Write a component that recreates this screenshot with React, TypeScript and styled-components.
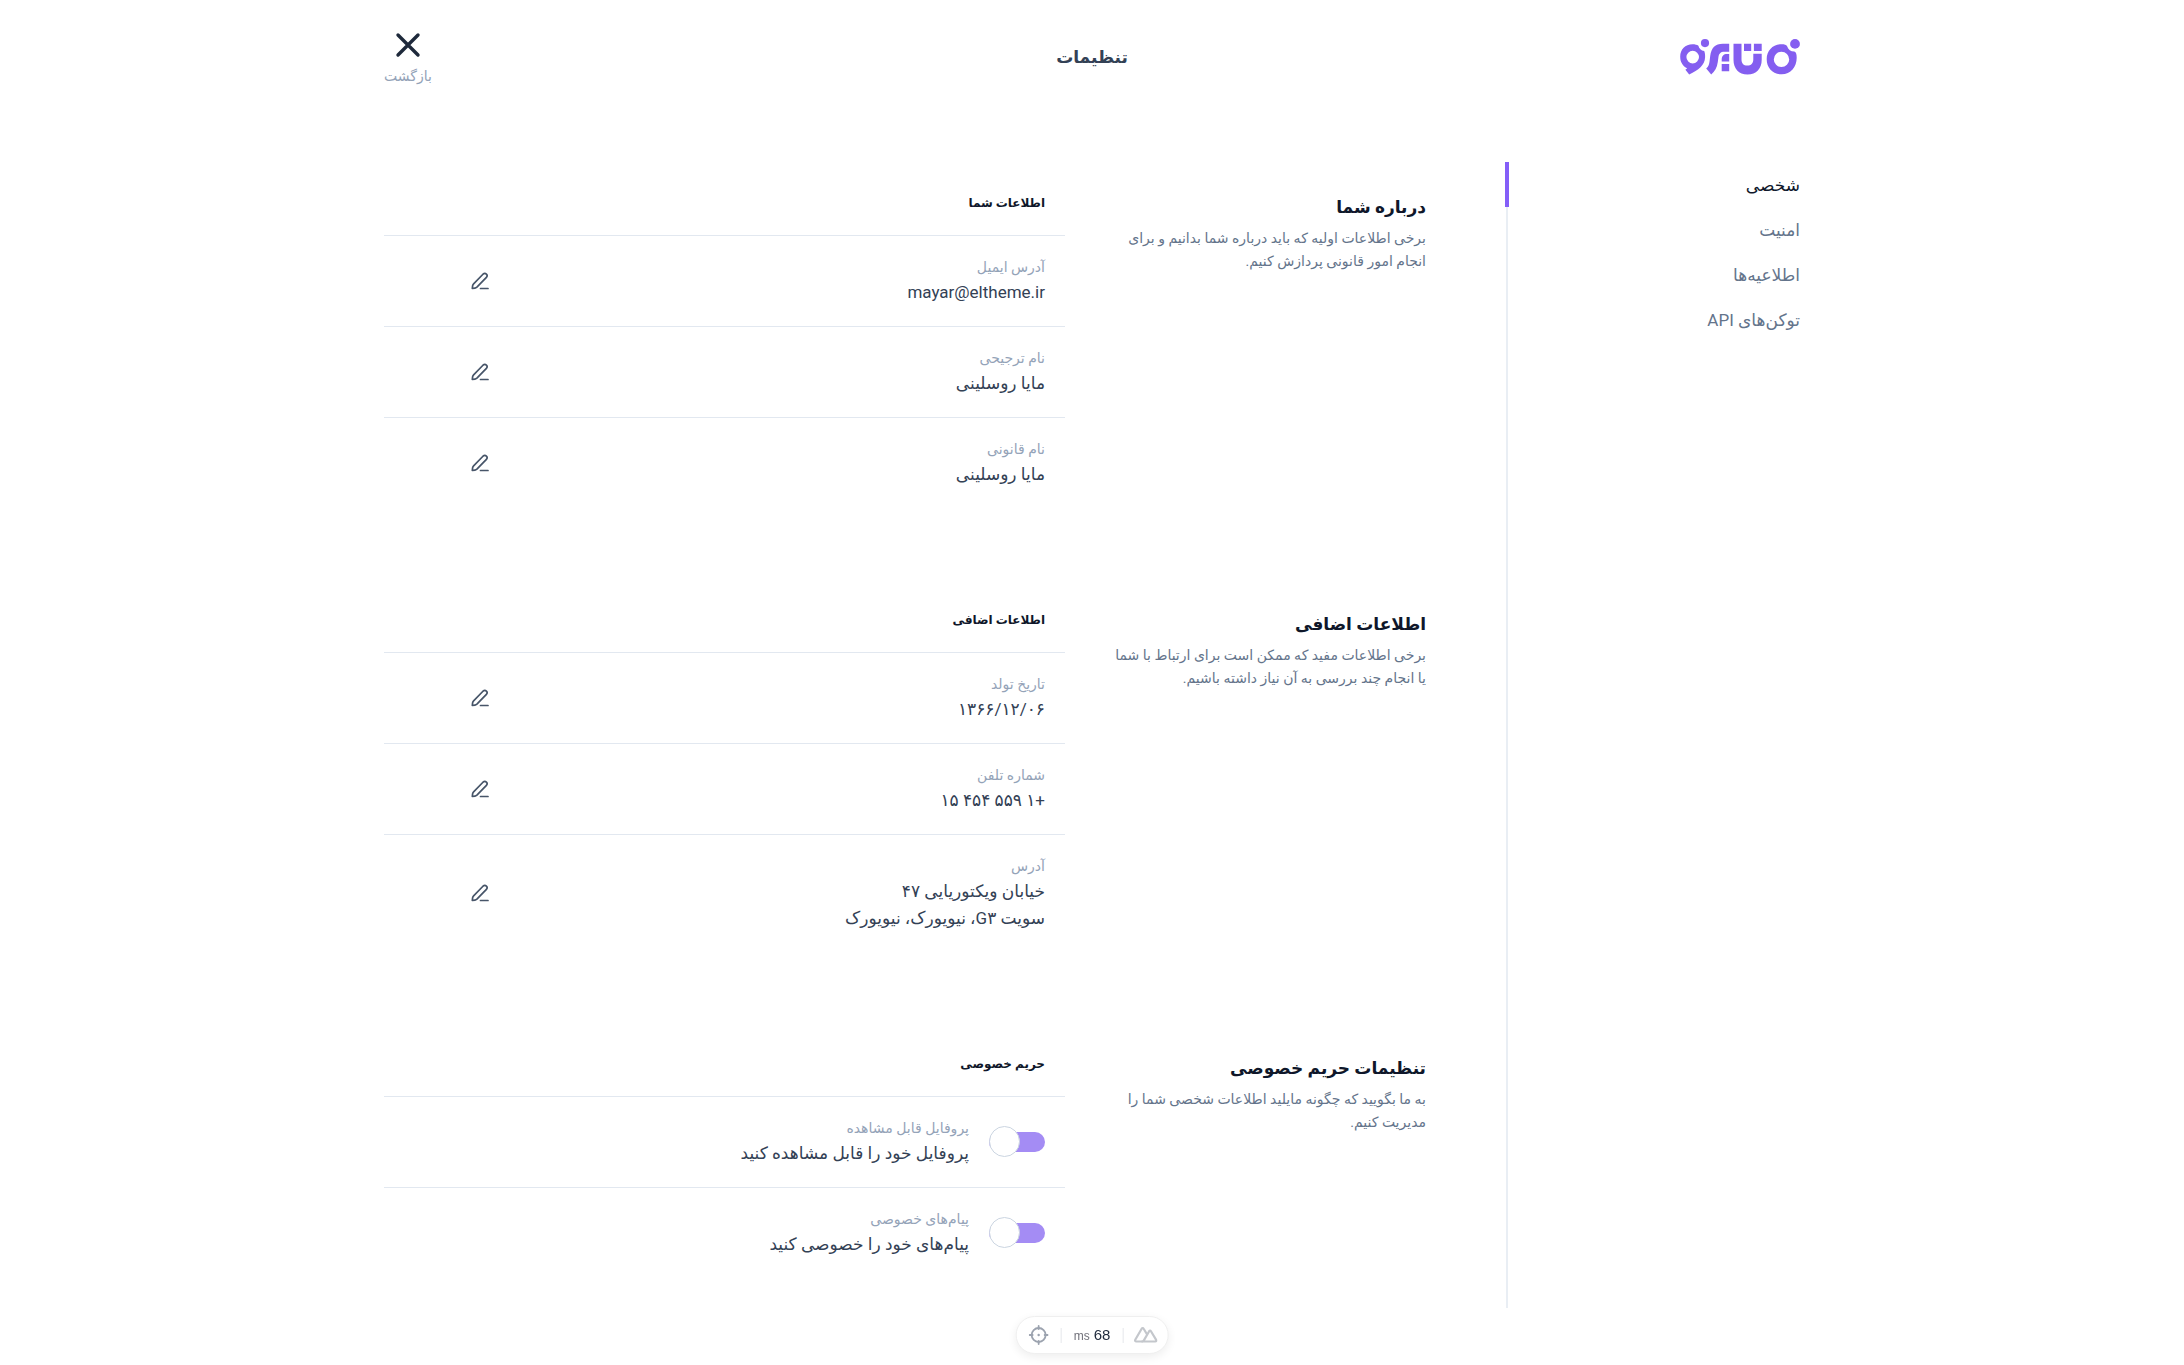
import React from "react";
import styled, { createGlobalStyle } from "styled-components";

const GlobalStyle = createGlobalStyle`
  *, *::before, *::after { box-sizing: border-box; }
  body {
    margin: 0;
    background: #fff;
    color: #334155;
    font-family: Roboto, "DejaVu Sans", sans-serif;
    font-size: 16px;
  }
  h1, h2, h3, p, ul { margin: 0; padding: 0; }
  ul { list-style: none; }
`;

const Page = styled.div`
  max-width: 1464px;
  min-height: 100vh;
  margin: 0 auto;
  padding: 0 24px 56px;
`;

const Header = styled.header`
  display: grid;
  grid-template-columns: 1fr auto 1fr;
  align-items: center;
  height: 114px;
  margin-bottom: 48px;
`;

const LogoLink = styled.a`
  display: block;
  width: 120px;
  height: 36px;
  color: #845ef0;
`;

const PageTitle = styled.h1`
  font-size: 17px;
  line-height: 28px;
  font-weight: 600;
  color: #334155;
`;

const BackButton = styled.button`
  justify-self: end;
  display: flex;
  flex-direction: column;
  align-items: center;
  gap: 8px;
  padding: 4px 0 0;
  border: 0;
  background: none;
  color: #94a3b8;
  font: inherit;
  font-size: 14px;
  line-height: 20px;
  cursor: pointer;
  svg { color: #1e293b; }
`;

const Columns = styled.div`
  display: flex;
`;

const Nav = styled.nav`
  position: relative;
  z-index: 1;
  flex: 0 0 292px;
  display: flex;
  flex-direction: column;
`;

const NavLink = styled.a<{ $active?: boolean }>`
  display: flex;
  align-items: center;
  height: 45px;
  margin-inline-end: -3px;
  border-inline-end: 4px solid ${(p) => (p.$active ? "#845ef8" : "transparent")};
  color: ${(p) => (p.$active ? "#0f172a" : "#64748b")};
  font-size: 17px;
  font-weight: ${(p) => (p.$active ? 500 : 400)};
  text-decoration: none;
`;

const Main = styled.main`
  flex: 1;
  min-width: 0;
  display: flex;
  flex-direction: column;
  gap: 71px;
  padding-inline-start: 80px;
  padding-bottom: 30px;
  border-inline-start: 2px solid #e9eef4;
`;

const Section = styled.section`
  display: grid;
  grid-template-columns: 361px minmax(0, 1fr);
`;

const Intro = styled.div`
  padding-top: 31px;
`;

const SectionTitle = styled.h2`
  font-size: 17px;
  line-height: 28px;
  font-weight: 700;
  color: #0f172a;
  margin-bottom: 6px;
`;

const Description = styled.p`
  font-size: 14px;
  line-height: 23px;
  color: #64748b;
  white-space: pre-line;
`;

const GroupTitle = styled.h3`
  height: 73px;
  padding: 29px 20px 0;
  font-size: 12px;
  line-height: 24px;
  font-weight: 700;
  color: #0f172a;
`;

const Row = styled.li`
  display: flex;
  align-items: center;
  gap: 20px;
  min-height: 91px;
  padding: 19px 20px 20px;
  border-top: 1px solid #e2e8f0;
`;

const RowText = styled.div`
  flex: 1;
  display: flex;
  flex-direction: column;
`;

const Label = styled.span`
  font-size: 14px;
  line-height: 24px;
  color: #94a3b8;
`;

const Value = styled.span`
  font-size: 17px;
  line-height: 27px;
  color: #334155;
  white-space: pre-line;
`;

const EditButton = styled.button`
  display: grid;
  place-items: center;
  width: 40px;
  height: 40px;
  margin-inline-end: 56px;
  padding: 0;
  border: 0;
  background: none;
  color: #475569;
  cursor: pointer;
`;

const SwitchRow = styled.label`
  flex: 1;
  display: flex;
  align-items: center;
  gap: 20px;
  cursor: pointer;
`;

const Switch = styled.input`
  appearance: none;
  flex: none;
  display: flex;
  align-items: center;
  justify-content: flex-start;
  width: 56px;
  height: 20px;
  margin: 0;
  border-radius: 10px;
  background: #cbd5e1;
  cursor: pointer;
  &:checked {
    justify-content: flex-end;
    background: #a48cf4;
  }
  &::before {
    content: "";
    flex: none;
    width: 31px;
    height: 31px;
    border: 1px solid #cbd5e1;
    border-radius: 50%;
    background: #fff;
  }
`;

const DevBar = styled.aside`
  position: fixed;
  bottom: 11px;
  left: 50%;
  transform: translateX(-50%);
  display: flex;
  align-items: center;
  height: 38px;
  padding: 0 10px 0 12px;
  border: 1px solid #efefef;
  border-radius: 19px;
  background: #fff;
  box-shadow: 0 3px 10px rgba(0, 0, 0, 0.07);
`;

const DevButton = styled.button`
  display: grid;
  place-items: center;
  padding: 0;
  border: 0;
  background: none;
  color: #9ca3af;
  cursor: pointer;
`;

const DevTiming = styled.div`
  display: flex;
  align-items: baseline;
  gap: 4px;
  margin: 0 10px 0 12px;
  padding: 0 12px;
  border: solid #e5e7eb;
  border-width: 0 1px;
  font-family: "Liberation Sans", sans-serif;
  font-size: 15px;
  line-height: 13px;
  color: #1e293b;
  small { font-size: 12px; color: #71717a; }
`;

const Logo = () => (
  <svg width="120" height="36" viewBox="0 0 120 36" fill="currentColor" aria-hidden="true">
    <path
      fillRule="evenodd"
      d="M101.5 5.3c3 0 4.800.5 5.600 1.900 1.200 3.600 3.600 5.200 7.200 5.400 2 .6 2.400 3 2.400 6.200 0 9.200-6 16.500-15 16.500S86.700 29 86.700 20.300 93 5.300 101.500 5.300zm0 7.400a7.700 7.700 0 1 0 .01 15.400 7.700 7.700 0 0 0-.01-15.400z"
    />
    <circle cx="115" cy="4.900" r="4.900" />
    <path d="M53.500 4.800h8v15.400c0 4 2 6.400 5.800 6.400s6-2.400 6-6.400v-5.500h8.400v6c0 9-5.400 14.700-14.200 14.700s-14-5.700-14-14.700z" />
    <path d="M64 4.800h7.200v7.200H64zM73.900 4.800h7.800v7.200h-7.800z" />
    <path d="M49.200 4.800v8h-4.800c-4 0-5.400 1.800-6 5.600l-.6 4.600c-.8 5.800-3 9.600-6.600 12.400l-5-6c2.400-1.800 3-4 3.400-7.400l.6-5c1-8 5-12.200 12.600-12.200z" />
    <path d="M49.200 15v7.600h-7.500v-2c0-3.600 1.900-5.600 5.500-5.600zM41.700 25h7.500v7.300h-7.500z" />
    <path
      fillRule="evenodd"
      d="M12.500 5.300c2.600 0 4.600.5 5.900 1.500.8 3.200 2.600 4.700 5.800 5.200.7 1.500 1 3.500.9 6.200-.4 8.200-6.500 12.600-15.900 17.200l-3.800-4.600 1.800-1.500C3 27.300.2 23.400.2 17.800.2 10.500 5.200 5.300 12.500 5.300zm.2 6.500a6.300 6.300 0 1 0 .01 12.600 6.300 6.300 0 0 0-.01-12.600z"
    />
    <circle cx="25" cy="4.100" r="4.100" />
  </svg>
);

const CloseIcon = () => (
  <svg width="26" height="26" viewBox="0 0 26 26" fill="none" stroke="currentColor" strokeWidth="3.400" strokeLinecap="round" aria-hidden="true">
    <path d="M3 3l20 20M23 3L3 23" />
  </svg>
);

const PenIcon = () => (
  <svg width="18" height="18" viewBox="0 0 18 18" fill="none" stroke="currentColor" strokeWidth="1.700" strokeLinecap="round" strokeLinejoin="round" aria-hidden="true">
    <path d="M1.300 16.500l.3-2.600c.1-.8.400-1.500 1-2.100L12.200 2a2.300 2.300 0 0 1 3.200 3.300L5.900 15.200c-.6.500-1.200.9-2 1z" />
    <path d="M9.500 16.500h7.500" />
  </svg>
);

const NuxtIcon = () => (
  <svg width="24" height="18" viewBox="0 0 24 18" fill="none" stroke="#c4c7cc" strokeWidth="2.200" strokeLinejoin="round" strokeLinecap="round" aria-hidden="true">
    <path d="M8.500 15.500H2.600c-1 0-1.500-.8-1-1.700L8 2.800c.5-.9 1.500-.9 2 0l3 5" />
    <path d="M9.200 15.500h12.400c1 0 1.400-.8.900-1.600L17.300 5.200c-.5-.8-1.300-.8-1.800 0l-5.300 9.200c-.4.700-1 1.100-1.700 1.100" />
  </svg>
);

const TargetIcon = () => (
  <svg width="20" height="20" viewBox="0 0 20 20" fill="none" stroke="currentColor" strokeWidth="1.800" strokeLinecap="round" aria-hidden="true">
    <circle cx="10" cy="10" r="7" />
    <path d="M10 1v3M10 16v3M1 10h3M16 10h3" />
    <circle cx="10" cy="10" r="1.200" fill="currentColor" stroke="none" />
  </svg>
);

const navItems = ["شخصی", "امنیت", "اطلاعیه‌ها", "توکن‌های API"];

type Item = { label: string; value: string; toggle?: boolean };
type Group = { title: string; description: string; heading: string; items: Item[] };

const groups: Group[] = [
  {
    title: "درباره شما",
    description: "برخی اطلاعات اولیه که باید درباره شما بدانیم و برای\nانجام امور قانونی پردازش کنیم.",
    heading: "اطلاعات شما",
    items: [
      { label: "آدرس ایمیل", value: "mayar@eltheme.ir" },
      { label: "نام ترجیحی", value: "مایا روسلینی" },
      { label: "نام قانونی", value: "مایا روسلینی" },
    ],
  },
  {
    title: "اطلاعات اضافی",
    description: "برخی اطلاعات مفید که ممکن است برای ارتباط با شما\nیا انجام چند بررسی به آن نیاز داشته باشیم.",
    heading: "اطلاعات اضافی",
    items: [
      { label: "تاریخ تولد", value: "۱۳۶۶/۱۲/۰۶" },
      { label: "شماره تلفن", value: "+۱ ۵۵۹ ۴۵۴ ۱۵" },
      { label: "آدرس", value: "خیابان ویکتوریایی ۴۷\nسویت G۳، نیویورک، نیویورک" },
    ],
  },
  {
    title: "تنظیمات حریم خصوصی",
    description: "به ما بگویید که چگونه مایلید اطلاعات شخصی شما را\nمدیریت کنیم.",
    heading: "حریم خصوصی",
    items: [
      { label: "پروفایل قابل مشاهده", value: "پروفایل خود را قابل مشاهده کنید", toggle: true },
      { label: "پیام‌های خصوصی", value: "پیام‌های خود را خصوصی کنید", toggle: true },
    ],
  },
];

const SettingText = ({ item }: { item: Item }) => (
  <RowText>
    <Label>{item.label}</Label>
    <Value>{item.value}</Value>
  </RowText>
);

const SettingRow = ({ item }: { item: Item }) => (
  <Row>
    {item.toggle ? (
      <SwitchRow>
        <Switch type="checkbox" role="switch" defaultChecked />
        <SettingText item={item} />
      </SwitchRow>
    ) : (
      <>
        <SettingText item={item} />
        <EditButton type="button" aria-label={item.label}>
          <PenIcon />
        </EditButton>
      </>
    )}
  </Row>
);

export default function App() {
  return (
    <>
      <GlobalStyle />
      <Page dir="rtl" lang="fa">
        <Header>
          <LogoLink href="#" aria-label="تایرو">
            <Logo />
          </LogoLink>
          <PageTitle>تنظیمات</PageTitle>
          <BackButton type="button">
            <CloseIcon />
            بازگشت
          </BackButton>
        </Header>
        <Columns>
          <Nav>
            {navItems.map((name, i) => (
              <NavLink key={name} href="#" $active={i === 0}>
                {name}
              </NavLink>
            ))}
          </Nav>
          <Main>
            {groups.map((group) => (
              <Section key={group.title}>
                <Intro>
                  <SectionTitle>{group.title}</SectionTitle>
                  <Description>{group.description}</Description>
                </Intro>
                <div>
                  <GroupTitle>{group.heading}</GroupTitle>
                  <ul>
                    {group.items.map((item) => (
                      <SettingRow key={item.label} item={item} />
                    ))}
                  </ul>
                </div>
              </Section>
            ))}
          </Main>
        </Columns>
        <DevBar dir="ltr">
          <DevButton type="button" aria-label="Inspector">
            <TargetIcon />
          </DevButton>
          <DevTiming>
            <small>ms</small>
            <span>68</span>
          </DevTiming>
          <DevButton type="button" aria-label="DevTools">
            <NuxtIcon />
          </DevButton>
        </DevBar>
      </Page>
    </>
  );
}
